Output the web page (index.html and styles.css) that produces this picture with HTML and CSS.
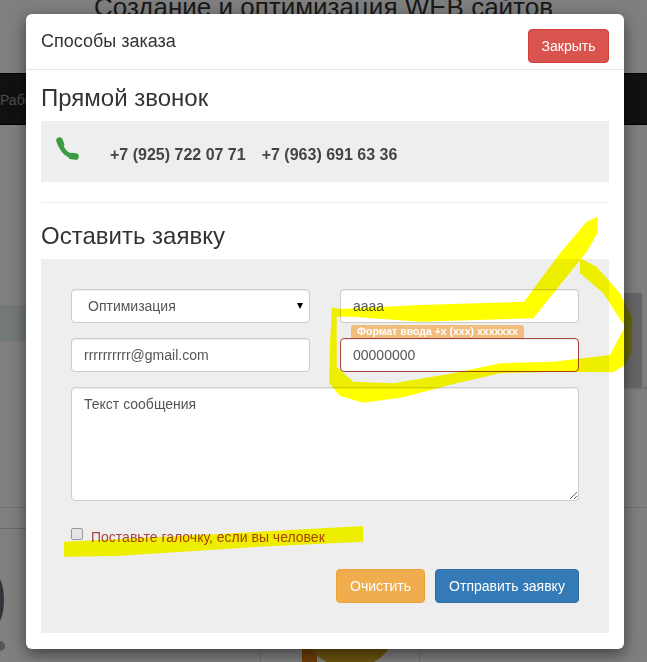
FILE: index.html
```html
<!DOCTYPE html>
<html lang="ru">
<head>
<meta charset="utf-8">
<title>Способы заказа</title>
<link rel="stylesheet" href="styles.css">
</head>
<body>
<div class="page">
  <header class="site-title">Создание и оптимизация WEB сайтов</header>
  <nav class="site-nav"><a class="site-nav-link">Работы</a></nav>
  <div class="decor decor-tint"></div>
  <div class="decor decor-panel"></div>
  <div class="decor decor-line-a"></div>
  <div class="decor decor-line-b"></div>
  <div class="decor decor-line-c"></div>
  <div class="decor decor-col-a"></div>
  <div class="decor decor-col-b"></div>
  <div class="decor decor-ellipse"></div>
  <div class="decor decor-spot"></div>
  <div class="decor decor-ribbon"></div>
  <div class="decor decor-medal"></div>
</div>
<div class="backdrop"></div>
<div class="modal">
  <div class="modal-header">
    <div class="modal-title">Способы заказа</div>
    <button class="btn btn-danger" type="button">Закрыть</button>
  </div>
  <div class="modal-body">
    <h3 class="section-title">Прямой звонок</h3>
    <div class="call-box">
      <svg class="phone-icon" viewBox="0 0 24 24" aria-hidden="true">
        <path class="phone-arc" d="M5.5 6C5.5 11 11 18.5 18.5 19.5"/>
        <path class="phone-end" d="M4.5 3.5L6 7.5"/>
        <path class="phone-end" d="M16.500 19L20.500 19.500"/>
      </svg>
      <div class="phones"><span>+7 (925) 722 07 71</span><span>+7 (963) 691 63 36</span></div>
    </div>
    <hr class="divider">
    <h3 class="section-title">Оставить заявку</h3>
    <form class="order-form">
      <div class="fields">
        <div class="select-wrap">
          <select class="control control-select"><option>Оптимизация</option></select>
        </div>
        <input class="control" type="text" value="аааа">
        <input class="control" type="text" value="rrrrrrrrrr@gmail.com">
        <div class="phone-field">
          <span class="hint">Формат ввода +х (ххх) ххххххх</span>
          <input class="control control-error" type="text" value="00000000">
        </div>
        <textarea class="control control-area" placeholder="Текст сообщения"></textarea>
      </div>
      <label class="human"><input class="human-check" type="checkbox"><span>Поставьте галочку, если вы человек</span></label>
      <div class="actions">
        <button class="btn btn-warning" type="reset">Очистить</button>
        <button class="btn btn-primary" type="button">Отправить заявку</button>
      </div>
    </form>
  </div>
</div>
<svg class="scribble" viewBox="0 0 647 662" aria-hidden="true">
  <path d="M597.300 216.700L586.700 221.700L560 253.300L524 301.700L420 305L340 309L332 307.300L330 343L329.300 383.300L340 396L363.300 402.700L403.300 397.300L453.300 384L500 373.300L553.300 371.700L613.300 372.300L625 365L631.700 351.700L631.700 316.700L620 293.300L596.700 266.700L580 258.300L580 273.300L603.300 293.300L625 326.700L610 355L553.300 361.700L500 363.300L453.300 373.300L393.300 383.300L353.300 381.700L336.700 366.700L336.700 316.700L353.300 316.700L420 321.700L533.300 318.300L586.700 251.700L597.300 233.300Z"/>
  <path d="M64 541.700L200 535L363 526L363 541.700L260 546.700L116.700 556L64 556.700Z"/>
</svg>
</body>
</html>
```
FILE: styles.css
```css
* { box-sizing: border-box; }
html, body { margin: 0; height: 100%; overflow: hidden; }
body { font-family: "Liberation Sans", Arial, sans-serif; font-size: 14px; color: #333; background: #fff; }

.page { position: relative; height: 662px; overflow: hidden; background: #fff; }
.site-title { height: 73px; line-height: 14px; text-align: center; font-family: "Liberation Sans Narrow", "Liberation Sans", sans-serif; font-size: 26px; color: #333; }
.site-nav { height: 52px; background: #222; border-top: 1px solid #000; border-bottom: 1px solid #000; padding-top: 17px; color: #9d9d9d; font-size: 14px; line-height: 18px; }

.decor { position: absolute; }
.decor-tint { left: 0; top: 305px; width: 26px; height: 36px; background: #e6f2f0; }
.decor-panel { left: 620px; top: 293px; width: 22px; height: 94px; background: #ccc; }
.decor-line-a { left: 0; top: 507px; width: 647px; height: 1px; background: #e0e0e0; }
.decor-line-b { left: 0; top: 528px; width: 26px; height: 1px; background: #d0d0d0; }
.decor-line-c { left: 610px; top: 387px; width: 37px; height: 2px; background: #ddd; }
.decor-col-a { left: 260px; top: 640px; width: 1px; height: 22px; background: #ddd; }
.decor-col-b { left: 419px; top: 640px; width: 1px; height: 22px; background: #ddd; }
.decor-ellipse { left: -14px; top: 575px; width: 18px; height: 50px; border-radius: 50%; background: #667; }
.decor-spot { left: -5px; top: 641px; width: 10px; height: 10px; border-radius: 50%; background: #aaa; }
.decor-ribbon { left: 302px; top: 630px; width: 15px; height: 40px; background: #e07a10; }
.decor-medal { left: 305px; top: 590px; width: 90px; height: 78px; border-radius: 50%; background: #d8aa20; }

.backdrop { position: fixed; inset: 0; background: rgba(0, 0, 0, .5); }

.modal { position: absolute; left: 26px; top: 14px; width: 598px; background: #fff; border-radius: 6px; box-shadow: 0 5px 15px rgba(0, 0, 0, .5); padding-bottom: 1px; }
.modal-header { display: flex; justify-content: space-between; align-items: flex-start; height: 56px; padding: 15px 15px 0; border-bottom: 1px solid #e5e5e5; }
.modal-title { font-size: 18px; line-height: 25px; color: #333; }
.modal-body { padding: 15px; }

.section-title { margin: 0 0 10px; font-size: 24px; font-weight: 400; line-height: 26px; color: #333; }
.call-box { display: flex; height: 61px; background: #eee; padding: 16px 0 0 14px; }
.phone-icon { width: 24px; height: 24px; flex: none; }
.phone-arc, .phone-end { fill: none; stroke: #3c9c45; stroke-linecap: round; }
.phone-arc { stroke-width: 4.5; }
.phone-end { stroke-width: 6.5; }
.phones { display: flex; gap: 16px; margin-left: 31px; padding-top: 9px; font-size: 16px; line-height: 18px; font-weight: 700; color: #444; }
.divider { margin: 20px 0; border: 0; border-top: 1px solid #eee; }

.order-form { background: #eee; padding: 30px; }
.fields { display: grid; grid-template-columns: 239px 239px; gap: 15px 30px; }
.control { display: block; width: 100%; height: 34px; padding: 6px 12px; font: 14px/20px "Liberation Sans", Arial, sans-serif; color: #555; background: #fff; border: 1px solid #ccc; border-radius: 4px; box-shadow: inset 0 1px 1px rgba(0, 0, 0, .075); outline: 0; }
.control-select { appearance: none; padding-left: 16px; }
.control-error { border-color: #a94442; }
.control-area { grid-column: 1 / 3; height: 114px; padding: 6px 12px; resize: vertical; }
.control-area::placeholder { color: #555; opacity: 1; }
.select-wrap { position: relative; }
.select-wrap::after { content: ""; position: absolute; right: 7px; top: 14px; border-style: solid; border-width: 6px 3px 0; border-color: #000 transparent transparent; }
.phone-field { position: relative; }
.hint { position: absolute; left: 11px; top: -13px; height: 13px; padding: 0 6px; font-size: 10.5px; line-height: 13px; font-weight: 700; color: #fff; background: #f0bd7d; border-radius: 3px 3px 0 0; white-space: nowrap; }

.human { display: flex; align-items: flex-start; margin-top: 27px; height: 41px; color: #a94442; font-size: 14px; line-height: 18px; }
.human-check { appearance: none; width: 12px; height: 12px; margin: 0 8px 0 0; background: #e4e4e4; border: 1px solid #999; border-radius: 2px; flex: none; }
.human span { padding-top: 0; }
.actions { display: flex; justify-content: flex-end; gap: 10px; }

.btn { height: 34px; padding: 6px 12px; font: 14px/20px "Liberation Sans", Arial, sans-serif; color: #fff; border: 1px solid transparent; border-radius: 4px; }
.btn-danger { width: 81px; background: #d9534f; border-color: #d43f3a; }
.btn-warning { width: 89px; background: #f0ad4e; border-color: #eea236; }
.btn-primary { width: 144px; background: #337ab7; border-color: #2e6da4; }

.scribble { position: absolute; left: 0; top: 0; width: 647px; height: 662px; mix-blend-mode: multiply; pointer-events: none; fill: #ff0; }
```
